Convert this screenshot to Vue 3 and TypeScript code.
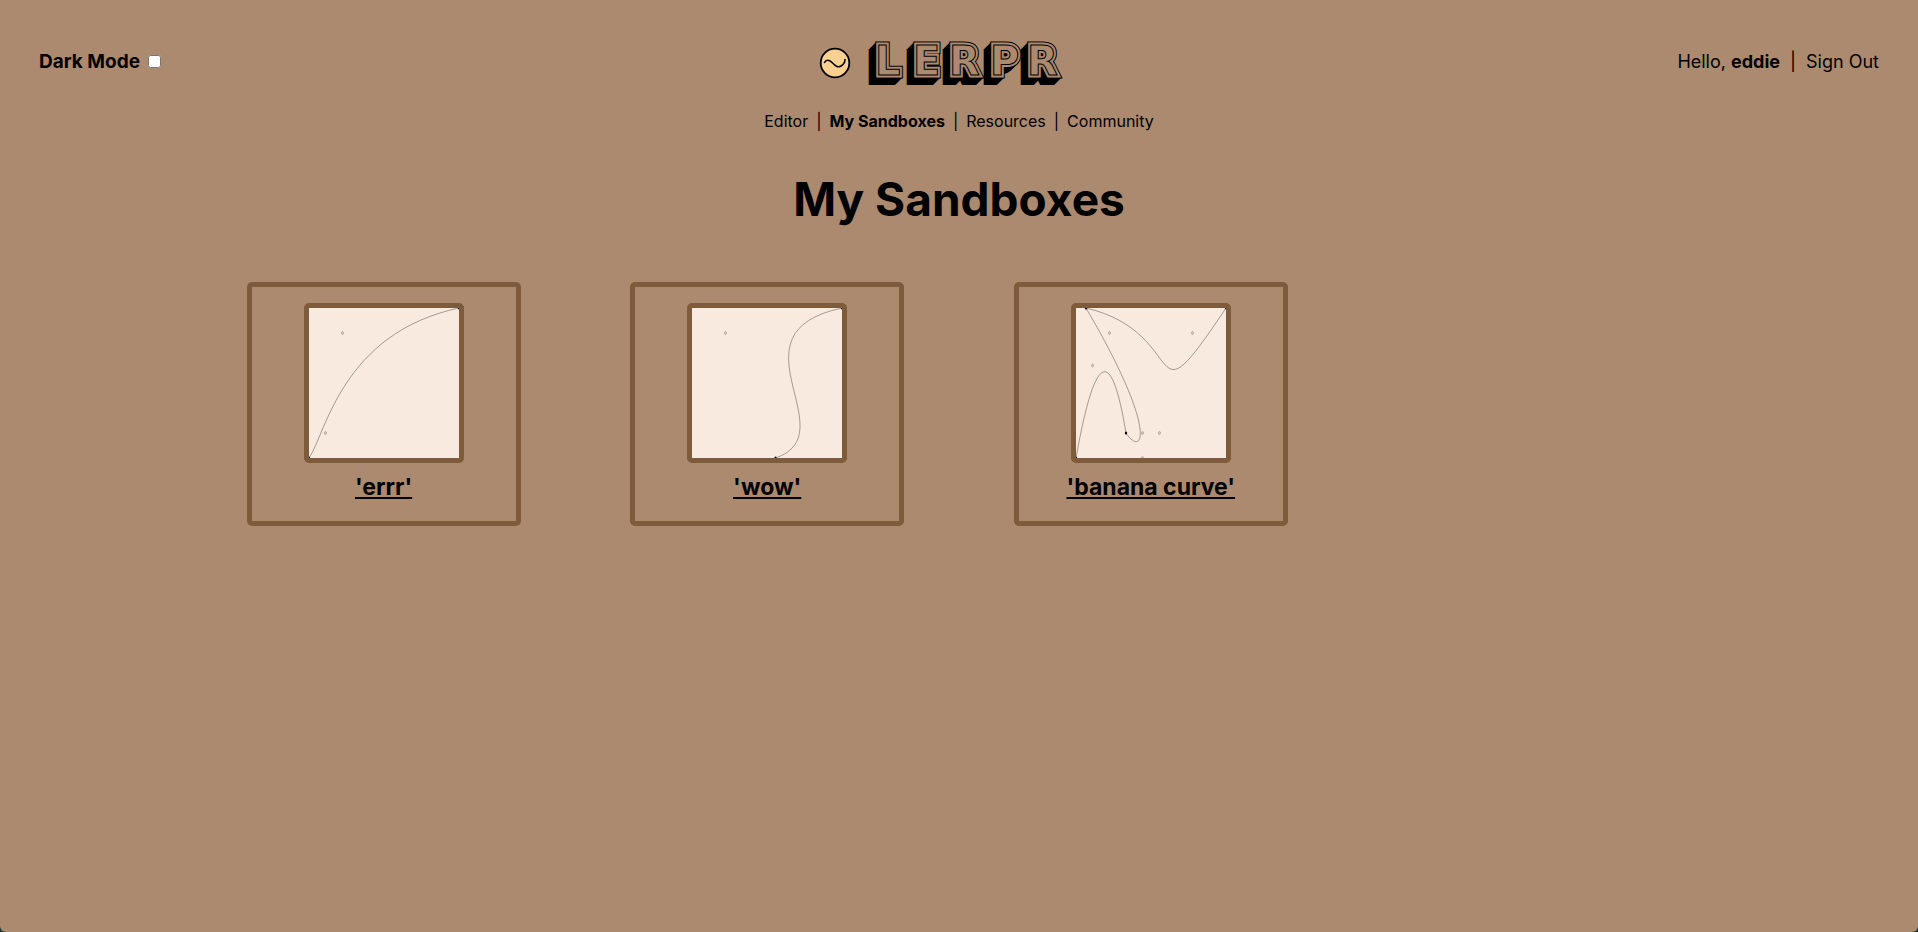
<script setup lang="ts">
import { ref } from 'vue'

interface Point {
  x: number
  y: number
}

interface Sandbox {
  name: string
  path: string
  anchors: Point[]
  handles: Point[]
}

const darkMode = ref(false)
const user = 'eddie'

const links = [
  { label: 'Editor', active: false },
  { label: 'My Sandboxes', active: true },
  { label: 'Resources', active: false },
  { label: 'Community', active: false },
]

const sandboxes: Sandbox[] = [
  {
    name: 'errr',
    path: 'M0 150C17 125 33 25 150 0',
    anchors: [{ x: 0, y: 150 }, { x: 150, y: 0 }],
    handles: [{ x: 16.5, y: 125 }, { x: 33.5, y: 25 }],
  },
  {
    name: 'wow',
    path: 'M83.5 150C156 125 33 25 150 0',
    anchors: [{ x: 83.5, y: 150 }, { x: 150, y: 0 }],
    handles: [{ x: 33.5, y: 25 }],
  },
  {
    name: 'banana curve',
    path: 'M0 150C16.5 57.5 33.5 25 50 125C66.5 150 83.5 125 10 0C116.5 25 66.5 125 150 0',
    anchors: [{ x: 0, y: 150 }, { x: 50, y: 125 }, { x: 10, y: 0 }, { x: 150, y: 0 }],
    handles: [
      { x: 16.5, y: 57.5 },
      { x: 33.5, y: 25 },
      { x: 66.5, y: 150 },
      { x: 83.5, y: 125 },
      { x: 116.5, y: 25 },
      { x: 66.5, y: 125 },
    ],
  },
]

const depth = [7, 6, 5, 4, 3, 2, 1]
</script>

<template>
  <div class="page">
    <header class="top">
      <label class="mode">Dark Mode <input v-model="darkMode" type="checkbox" /></label>
      <a class="brand" href="#">
        <svg class="mark" viewBox="0 0 32 32" aria-hidden="true">
          <circle cx="16" cy="16" r="14.3" fill="#fcd090" stroke="#000" stroke-width="1.8" />
          <path d="M5.5 15.5C7 12.5 10 12.5 13 15.5C16.5 19 18.5 21 22 19C24.5 17.5 26 15 26 12.5" fill="none" stroke="#000" stroke-width="1.6" stroke-linecap="round" />
        </svg>
        <svg class="wordmark" viewBox="0 0 194 46">
          <defs>
            <text id="word" y="35" x="6 44 80 121 158">LERPR</text>
          </defs>
          <use v-for="d in depth" :key="d" class="side" href="#word" :x="-d" :y="d" />
          <use class="edge" href="#word" />
          <use class="band" href="#word" />
          <use class="inline" href="#word" />
        </svg>
      </a>
      <div class="account">
        <span>Hello, <strong>{{ user }}</strong></span>
        <span>|</span>
        <a href="#">Sign Out</a>
      </div>
    </header>

    <nav class="nav">
      <template v-for="(link, i) in links" :key="link.label">
        <span v-if="i > 0">|</span>
        <a href="#" :class="{ active: link.active }">{{ link.label }}</a>
      </template>
    </nav>

    <main>
      <h1>My Sandboxes</h1>
      <div class="grid">
        <article v-for="box in sandboxes" :key="box.name" class="card">
          <svg class="thumb" viewBox="0 0 150 150" aria-hidden="true">
            <path :d="box.path" class="curve" />
            <ellipse v-for="(p, i) in box.handles" :key="i" :cx="p.x" :cy="p.y" rx="1" ry="1.5" class="handle" />
            <ellipse v-for="(p, i) in box.anchors" :key="i" :cx="p.x" :cy="p.y" rx="1.2" ry="1.5" />
          </svg>
          <a class="name" href="#">'{{ box.name }}'</a>
        </article>
      </div>
    </main>
  </div>
</template>

<style>
html {
  background: #17393f;
}

body {
  margin: 0;
}
</style>

<style scoped>
.page {
  box-sizing: border-box;
  min-height: 100vh;
  padding-top: 40px;
  border-radius: 0 0 6px 6px;
  background: #ac8a6f;
  color: #000;
  font-family: Inter, "Noto Sans", sans-serif;
}

a {
  color: inherit;
  text-decoration: none;
}

.top {
  display: grid;
  grid-template-columns: 1fr auto 1fr;
  align-items: center;
  padding: 0 39px;
}

.mode {
  display: flex;
  align-items: center;
  gap: 8px;
  margin-bottom: 3px;
  font-size: 19px;
  font-weight: 700;
  line-height: 24px;
}

.mode input {
  width: 13px;
  height: 13px;
  margin: 0;
}

.brand {
  display: flex;
  align-items: center;
  gap: 18px;
  padding-right: 36px;
}

.mark {
  width: 32px;
  height: 32px;
}

.wordmark {
  width: 194px;
  height: 46px;
  overflow: visible;
  font-family: "DejaVu Sans", sans-serif;
  font-size: 40px;
  font-weight: 700;
}

.side,
.edge {
  fill: #000;
  stroke: #000;
  stroke-width: 7px;
}

.side {
  stroke-width: 6px;
}

.band {
  fill: #ac8a6f;
  stroke: #ac8a6f;
  stroke-width: 5px;
}

.inline {
  fill: #ac8a6f;
  stroke: #000;
  stroke-width: 1px;
}

.account {
  display: flex;
  justify-content: flex-end;
  gap: 10px;
  margin-bottom: 3px;
  font-size: 18px;
  line-height: 24px;
}

.nav {
  display: flex;
  justify-content: center;
  gap: 8px;
  margin-top: 25px;
  font-size: 16px;
  line-height: 20px;
}

.active {
  font-weight: 700;
}

h1 {
  margin: 36px 0 51px;
  font-size: 46px;
  line-height: 64px;
  text-align: center;
}

.grid {
  display: grid;
  grid-template-columns: repeat(4, 1fr);
  width: 80%;
  margin: 0 auto;
  justify-items: center;
}

.card {
  box-sizing: border-box;
  display: flex;
  flex-direction: column;
  align-items: center;
  width: 274px;
  padding: 16px 0 20px;
  border: 5px solid #7e5b3b;
  border-radius: 5px;
}

.thumb {
  width: 150px;
  height: 150px;
  border: 5px solid #7e5b3b;
  border-radius: 5px;
  background: #f8eade;
}

.curve {
  fill: none;
  stroke: #6d6259;
  stroke-width: 0.6px;
}

.handle {
  fill: #d8ccc0;
  stroke: #8d8278;
  stroke-width: 0.5px;
}

.name {
  margin-top: 10px;
  font-size: 23px;
  font-weight: 700;
  line-height: 28px;
  text-decoration: underline;
}
</style>
